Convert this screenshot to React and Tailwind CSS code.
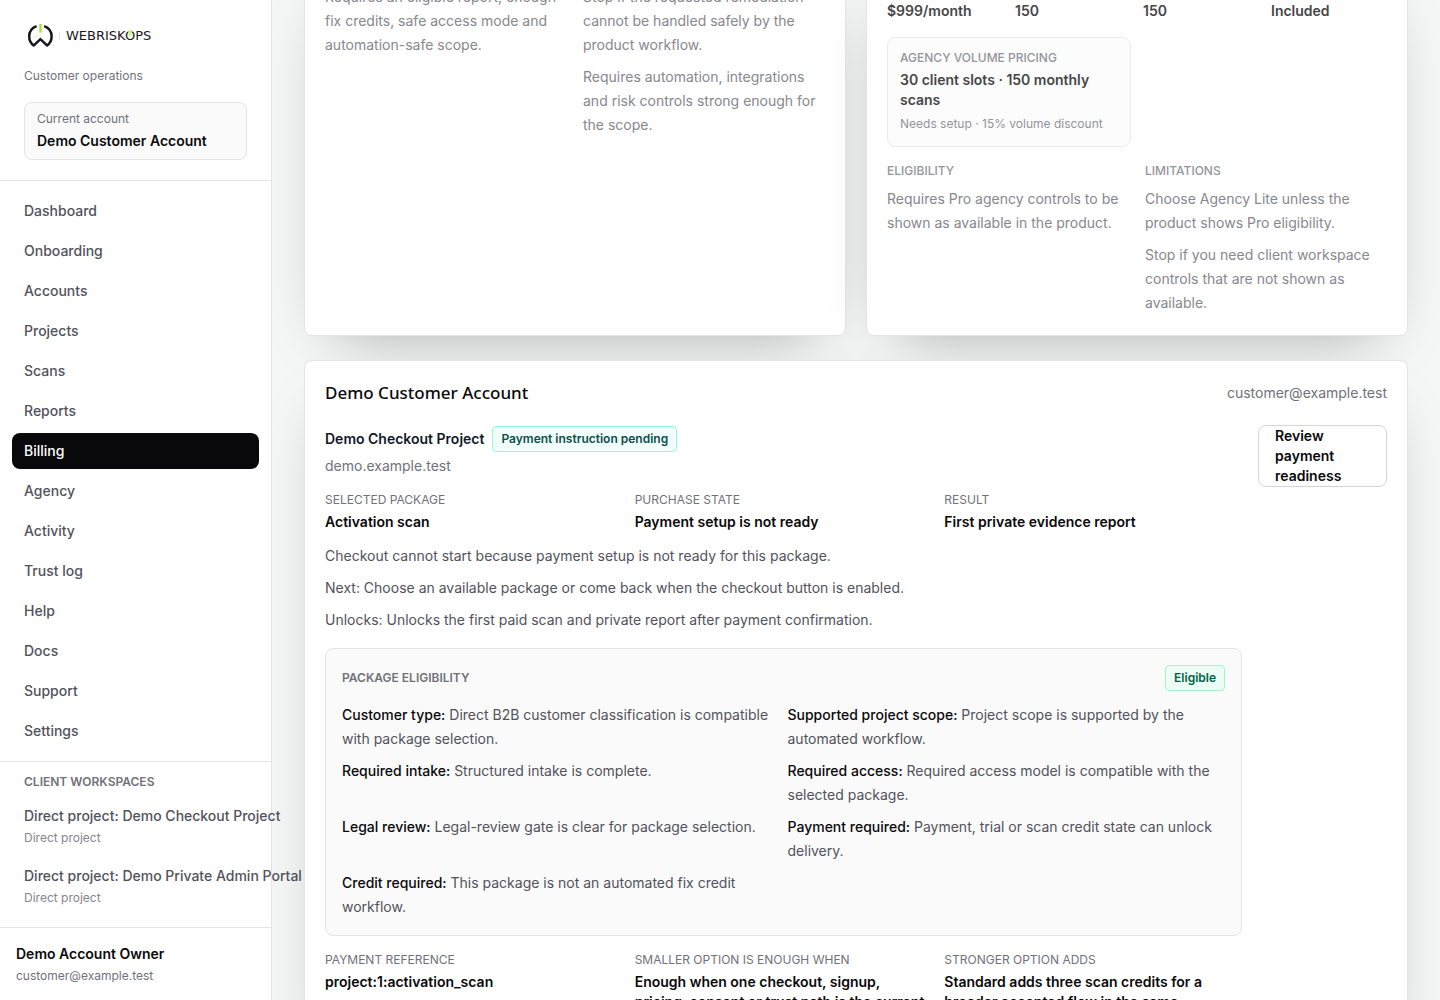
import React from "react";

const navItems = [
  "Dashboard",
  "Onboarding",
  "Accounts",
  "Projects",
  "Scans",
  "Reports",
  "Billing",
  "Agency",
  "Activity",
  "Trust log",
  "Help",
  "Docs",
  "Support",
  "Settings",
];

const workspaces = [
  "Direct project: Demo Checkout Project",
  "Direct project: Demo Private Admin Portal",
];

const eligibility = [
  ["Customer type:", "Direct B2B customer classification is compatible with package selection."],
  ["Supported project scope:", "Project scope is supported by the automated workflow."],
  ["Required intake:", "Structured intake is complete."],
  ["Required access:", "Required access model is compatible with the selected package."],
  ["Legal review:", "Legal-review gate is clear for package selection."],
  ["Payment required:", "Payment, trial or scan credit state can unlock delivery."],
  ["Credit required:", "This package is not an automated fix credit workflow."],
];

const summary = [
  ["Selected package", "Activation scan"],
  ["Purchase state", "Payment setup is not ready"],
  ["Result", "First private evidence report"],
];

const reference = [
  ["Payment reference", "project:1:activation_scan"],
  [
    "Smaller option is enough when",
    "Enough when one checkout, signup, pricing, consent or trust path is the current concern.",
  ],
  [
    "Stronger option adds",
    "Standard adds three scan credits for a broader accepted flow in the same customer-approved scope.",
  ],
];

const Logo = () => (
  <a href="#home" aria-label="Webriskops" className="flex h-6 items-center">
    <svg viewBox="0 0 32 26" className="h-[26px] w-8" fill="none" aria-hidden="true">
      <path
        d="M12.6 3.2C8.2 4.8 5.2 8.8 5.2 13.4C5.2 17.2 7 20.4 9.8 22.4L16.4 16.2L23 22.4C25.8 20.4 27.6 17.2 27.6 13.4C27.6 8.8 24.6 4.8 20.2 3.2"
        stroke="#18181b"
        strokeWidth="2.5"
      />
      <path d="M16.5 1V9.6" stroke="#a3e635" strokeWidth="2.4" />
    </svg>
    <span className="ml-[3px] h-2 w-px bg-zinc-200" />
    <span className="ml-1.5 font-['DejaVu_Sans',sans-serif] text-[13px] leading-4 text-zinc-900">
      WEBRISK
      <span className="relative">
        O
        <span className="absolute top-0.5 left-1/2 h-1.5 w-[3px] -translate-x-1/2 border-x border-white bg-lime-400" />
      </span>
      PS
    </span>
  </a>
);

const Sidebar = () => (
  <aside className="relative z-10 flex h-screen w-68 shrink-0 flex-col border-r border-zinc-200 bg-white">
    <div className="border-b border-zinc-200 px-6 pt-6 pb-5">
      <Logo />
      <p className="mt-5 text-xs text-zinc-500">Customer operations</p>
      <div className="mt-[18px] rounded-lg border border-zinc-200 bg-zinc-50 px-3 py-2">
        <p className="text-xs text-zinc-500">Current account</p>
        <p className="mt-1 text-sm font-semibold">Demo Customer Account</p>
      </div>
    </div>

    <nav className="flex flex-col gap-1 px-3 py-3">
      {navItems.map((item) => (
        <a
          key={item}
          href={`#${item.toLowerCase().replace(" ", "-")}`}
          className={
            item === "Billing"
              ? "rounded-lg bg-zinc-950 px-3 py-2 text-sm font-medium text-white"
              : "rounded-lg px-3 py-2 text-sm font-medium text-zinc-600"
          }
        >
          {item}
        </a>
      ))}
    </nav>

    <div className="border-t border-zinc-200 px-3 pt-3">
      <p className="px-3 text-xs font-semibold text-zinc-500 uppercase">Client workspaces</p>
      <div className="mt-2 flex flex-col gap-1">
        {workspaces.map((name) => (
          <a key={name} href="#workspace" className="px-3 py-2 whitespace-nowrap">
            <span className="block text-sm font-medium text-zinc-600">{name}</span>
            <span className="mt-1 block text-xs text-[#85858e]">Direct project</span>
          </a>
        ))}
      </div>
    </div>

    <div className="mt-auto border-t border-zinc-200 p-4">
      <p className="text-sm font-semibold">Demo Account Owner</p>
      <p className="mt-1 text-xs text-zinc-500">customer@example.test</p>
    </div>
  </aside>
);

const Card = ({ className = "", children }) => (
  <section
    className={`relative rounded-lg border border-zinc-200 bg-white p-5 shadow-[0_24px_60px_-32px_rgb(0_0_0/0.38)] ${className}`}
  >
    {children}
  </section>
);

const Facts = ({ items, className }) => (
  <dl className={`grid grid-cols-3 gap-3 ${className}`}>
    {items.map(([label, value]) => (
      <div key={label}>
        <dt className="text-xs text-zinc-500 uppercase">{label}</dt>
        <dd className="mt-1 text-sm font-semibold">{value}</dd>
      </div>
    ))}
  </dl>
);

const PackageCards = () => (
  <div className="-mt-9 grid grid-cols-2 gap-5">
    <Card>
      <div className="grid grid-cols-2 gap-4 text-sm leading-6 text-[#87878e]">
        <p>Requires an eligible report, enough fix credits, safe access mode and automation-safe scope.</p>
        <div>
          <p>Stop if the requested remediation cannot be handled safely by the product workflow.</p>
          <p className="mt-2">
            Requires automation, integrations and risk controls strong enough for the scope.
          </p>
        </div>
      </div>
    </Card>

    <Card>
      <div className="mt-4 grid grid-cols-4 gap-3 text-sm font-semibold text-[#464648]">
        <p>$999/month</p>
        <p>150</p>
        <p>150</p>
        <p>Included</p>
      </div>
      <div className="mt-4 grid grid-cols-2 gap-3">
        <div className="rounded-lg border border-[#ebebed] bg-[#fcfcfc] p-3">
          <p className="text-xs font-medium text-[#94949c] uppercase">Agency volume pricing</p>
          <p className="mt-1 text-sm font-semibold text-[#464648]">
            30 client slots · 150 monthly scans
          </p>
          <p className="mt-1 text-xs leading-5 text-[#94949c]">Needs setup · 15% volume discount</p>
        </div>
      </div>
      <div className="mt-4 grid grid-cols-2 gap-4 text-sm leading-6 text-[#87878e]">
        <div>
          <h3 className="text-xs font-medium text-[#94949c] uppercase">Eligibility</h3>
          <p className="mt-2">Requires Pro agency controls to be shown as available in the product.</p>
        </div>
        <div>
          <h3 className="text-xs font-medium text-[#94949c] uppercase">Limitations</h3>
          <p className="mt-2">Choose Agency Lite unless the product shows Pro eligibility.</p>
          <p className="mt-2">
            Stop if you need client workspace controls that are not shown as available.
          </p>
        </div>
      </div>
    </Card>
  </div>
);

const AccountCard = () => (
  <Card className="mt-6">
    <div className="flex items-center justify-between">
      <h2 className="font-['Noto_Sans',sans-serif] text-[17px] leading-6 font-medium">
        Demo Customer Account
      </h2>
      <p className="text-sm text-zinc-500">customer@example.test</p>
    </div>

    <div className="mt-5 flex items-start gap-4">
      <div className="min-w-0 flex-1 pt-px">
        <div className="flex items-center gap-2">
          <h3 className="text-sm font-semibold text-slate-900">Demo Checkout Project</h3>
          <span className="rounded border border-teal-200 bg-teal-50 px-2 py-1 text-xs font-semibold text-teal-900">
            Payment instruction pending
          </span>
        </div>
        <p className="mt-1 text-sm text-zinc-500">demo.example.test</p>

        <Facts items={summary} className="mt-4" />

        <div className="mt-3 flex flex-col gap-2 text-sm leading-6 text-zinc-600">
          <p>Checkout cannot start because payment setup is not ready for this package.</p>
          <p>Next: Choose an available package or come back when the checkout button is enabled.</p>
          <p>Unlocks: Unlocks the first paid scan and private report after payment confirmation.</p>
        </div>

        <div className="mt-4 rounded-lg border border-zinc-200 bg-zinc-50 p-4">
          <div className="flex items-center justify-between">
            <h4 className="text-xs font-semibold text-zinc-500 uppercase">Package eligibility</h4>
            <span className="rounded border border-emerald-200 bg-emerald-50 px-2 py-1 text-xs font-semibold text-emerald-800">
              Eligible
            </span>
          </div>
          <div className="mt-3 grid grid-cols-2 gap-2 text-sm leading-6 text-zinc-600">
            {eligibility.map(([label, text]) => (
              <p key={label}>
                <span className="font-medium text-zinc-950">{label}</span> {text}
              </p>
            ))}
          </div>
        </div>

        <Facts items={reference} className="mt-4" />
      </div>

      <button
        type="button"
        className="w-[129px] shrink-0 rounded-lg border border-zinc-300 bg-white px-4 text-left text-sm font-semibold"
      >
        Review payment readiness
      </button>
    </div>
  </Card>
);

const App = () => {
  return (
    <div className="flex h-screen overflow-hidden bg-[#f4f7f5] font-['Inter',sans-serif] text-zinc-950">
      <Sidebar />
      <main className="min-w-0 flex-1 overflow-hidden px-8">
        <PackageCards />
        <AccountCard />
      </main>
    </div>
  );
};

export default App;
